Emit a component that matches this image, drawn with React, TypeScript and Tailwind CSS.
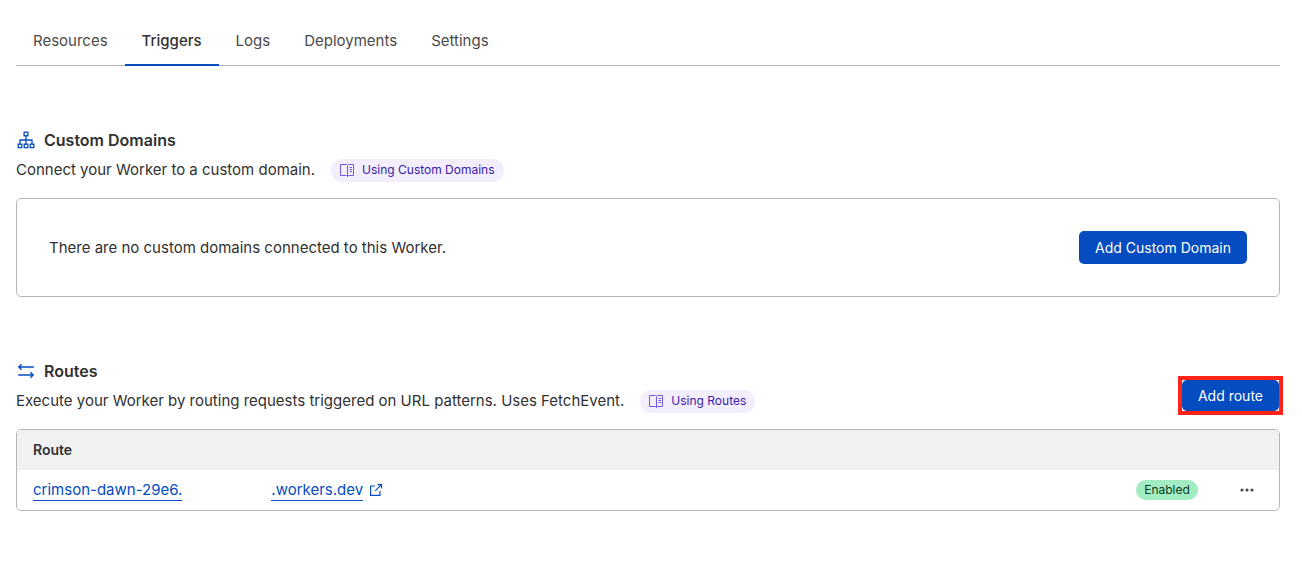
import React from "react";

const tabs = ["Resources", "Triggers", "Logs", "Deployments", "Settings"];

function SitemapIcon() {
  return (
    <svg width="20" height="20" viewBox="-1 -1 20 20" fill="none" stroke="#044cbf" strokeWidth="1.3" aria-hidden="true">
      <rect x="7.1" y="1.2" width="3.8" height="3.6" />
      <rect x="1.2" y="13.2" width="3.6" height="3.4" />
      <rect x="7.2" y="13.2" width="3.6" height="3.4" />
      <rect x="13.2" y="13.2" width="3.6" height="3.4" />
      <path d="M9 4.8v8.4M3 13.2V9h12v4.2" />
    </svg>
  );
}

function RoutesIcon() {
  return (
    <svg width="20" height="20" viewBox="-1 -1 20 20" fill="none" stroke="#044cbf" strokeWidth="1.3" aria-hidden="true">
      <path d="M16.8 5H1.8M4.6 2.2L1.8 5l2.8 2.8M1.2 13h15M13.4 10.2l2.8 2.8-2.8 2.8" />
    </svg>
  );
}

function BookIcon() {
  return (
    <svg width="14" height="14" viewBox="0 0 14 14" fill="none" stroke="#7458e0" strokeWidth="1" aria-hidden="true">
      <path d="M7.5 2.5l-1-1h-6v11h6l1 1 1-1h5v-11h-5l-1 1zM7.5 2.5v11" />
      <path d="M9.5 4.5h2.5M9.5 6.5h2.5M9.5 8.5h2.5" />
    </svg>
  );
}

function ExternalIcon() {
  return (
    <svg width="14" height="14" viewBox="0 0 14 14" fill="none" stroke="#044cbf" strokeWidth="1.2" aria-hidden="true">
      <path d="M6 3H1.6v9.4H11V8M8.5 1.6h4v4M12.4 1.7L6.2 7.9" />
    </svg>
  );
}

function DocsLink({ children }: { children: React.ReactNode }) {
  return (
    <a
      href="#docs"
      className="inline-flex h-[23px] items-center gap-2 rounded-full bg-[#f2eefe] px-[9px] text-xs whitespace-nowrap text-[#3a1aa8]"
    >
      <BookIcon />
      {children}
    </a>
  );
}

function SectionTitle({ icon, children }: { icon: React.ReactNode; children: React.ReactNode }) {
  return (
    <h2 className="flex items-center gap-2 text-base font-semibold">
      {icon}
      {children}
    </h2>
  );
}

export default function App() {
  return (
    <main className="bg-white pt-[19px] pr-[22px] pb-14 pl-4 font-['Inter',sans-serif] text-[15px] leading-6 text-[#313131]">
      <nav className="flex border-b border-[#b6b6b6]">
        {tabs.map((tab) =>
          tab === "Triggers" ? (
            <a
              key={tab}
              href="#triggers"
              aria-current="page"
              className="-mb-px border-b-2 border-[#044cbf] px-[17px] pt-2.5 pb-[11px] font-medium"
            >
              {tab}
            </a>
          ) : (
            <a key={tab} href={`#${tab.toLowerCase()}`} className="px-[17px] pt-2.5 pb-[11px] text-[#4a4a4a]">
              {tab}
            </a>
          )
        )}
      </nav>

      <section className="mt-[62px]">
        <SectionTitle icon={<SitemapIcon />}>Custom Domains</SectionTitle>
        <div className="mt-1.5 flex items-center gap-4">
          <p>Connect your Worker to a custom domain.</p>
          <DocsLink>Using Custom Domains</DocsLink>
        </div>
        <div className="mt-4 flex items-center justify-between rounded-[5px] border border-[#b6b6b6] p-8">
          <p>There are no custom domains connected to this Worker.</p>
          <button type="button" className="h-[33px] rounded-[5px] bg-[#044cbf] px-4 text-sm text-white">
            Add Custom Domain
          </button>
        </div>
      </section>

      <section className="mt-[62px]">
        <div className="flex items-end justify-between">
          <div>
            <SectionTitle icon={<RoutesIcon />}>Routes</SectionTitle>
            <div className="mt-1.5 flex items-center gap-4">
              <p>Execute your Worker by routing requests triggered on URL patterns. Uses FetchEvent.</p>
              <DocsLink>Using Routes</DocsLink>
            </div>
          </div>
          <div className="-mr-[3px] -mb-0.5 border-4 border-[#ff2318]">
            <button type="button" className="block h-[31px] rounded-[5px] bg-[#044cbf] px-4 text-sm text-white">
              Add route
            </button>
          </div>
        </div>
        <div className="mt-4 overflow-hidden rounded-[5px] border border-[#b6b6b6]">
          <table className="w-full">
            <thead>
              <tr className="h-10 bg-[#f1f1f1]">
                <th scope="col" colSpan={3} className="px-4 text-left text-sm font-semibold">
                  Route
                </th>
              </tr>
            </thead>
            <tbody>
              <tr className="h-10">
                <td className="px-4">
                  <a href="#route" className="flex items-center leading-5 text-[#044cbf]">
                    <span className="mr-[89px] border-b border-[#044cbf]">crimson-dawn-29e6.</span>
                    <span className="mr-1.5 border-b border-[#044cbf]">.workers.dev</span>
                    <ExternalIcon />
                  </a>
                </td>
                <td className="w-24">
                  <div className="flex justify-center">
                    <span className="rounded-full bg-[#a1ecc1] px-2 text-xs leading-5 text-[#0d3b20]">Enabled</span>
                  </div>
                </td>
                <td className="w-16">
                  <button type="button" aria-label="Route actions" className="mx-auto flex h-6 w-8 items-center justify-center">
                    <svg width="14" height="4" viewBox="0 0 14 4" fill="#4a4a4a" aria-hidden="true">
                      <circle cx="2" cy="2" r="1.6" />
                      <circle cx="7" cy="2" r="1.6" />
                      <circle cx="12" cy="2" r="1.6" />
                    </svg>
                  </button>
                </td>
              </tr>
            </tbody>
          </table>
        </div>
      </section>
    </main>
  );
}
